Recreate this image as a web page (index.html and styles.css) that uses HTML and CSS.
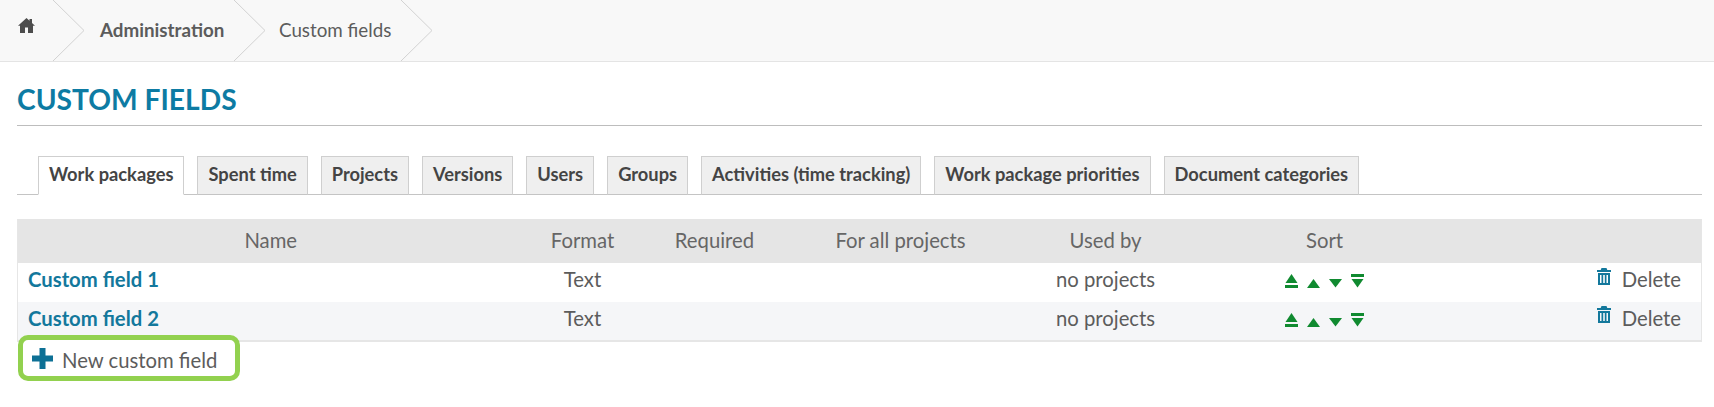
FILE: index.html
```html
<!doctype html>
<html>

<head>
    <title>Custom fields</title>
    <link rel="stylesheet" href="styles.css">
</head>

<body>

    <svg class="iconDefs" width="0" height="0">
        <symbol id="sortTop" viewBox="0 0 13 15">
            <path d="M6.500 0 12.500 9H.5z" />
            <rect x="0" y="11" width="13" height="3" />
        </symbol>
        <symbol id="sortUp" viewBox="0 0 13 15">
            <path d="M6.500 5 13 14H0z" />
        </symbol>
        <symbol id="sortDown" viewBox="0 0 13 15">
            <path d="M0 5H13L6.500 13.500z" />
        </symbol>
        <symbol id="sortBottom" viewBox="0 0 13 15">
            <rect x="0" y="0" width="13" height="3" />
            <path d="M.5 5H12.500L6.500 13.500z" />
        </symbol>
        <symbol id="trash" viewBox="0 0 14 17">
            <path d="M4.500 0H9.500L10.300 2H14V4H0V2H3.700z" />
            <path fill-rule="evenodd" d="M1 5H13V17H1zM3 7V15H4.500V7zM6.200 7V15H7.800V7zM9.500 7V15H11V7z" />
        </symbol>
    </svg>

    <nav class="breadcrumb">
        <a class="crumbHome" href="#">
            <svg width="17" height="15" viewBox="0 0 17 15">
                <path d="M8.500 0 11.500 2.700V1H14V5L17 7.800H15V15H10V9.500H7V15H2V7.800H0z" />
            </svg>
        </a>
        <svg class="chevron" width="33" height="61" viewBox="0 0 33 61">
            <path d="M0 0 31 30.500 0 61" />
        </svg>
        <a class="crumb crumbBold" href="#">Administration</a>
        <svg class="chevron" width="33" height="61" viewBox="0 0 33 61">
            <path d="M0 0 31 30.500 0 61" />
        </svg>
        <span class="crumb">Custom fields</span>
        <svg class="chevron" width="33" height="61" viewBox="0 0 33 61">
            <path d="M0 0 31 30.500 0 61" />
        </svg>
    </nav>

    <main class="content">

        <h2 class="pageTitle">Custom fields</h2>

        <ul class="tabs">
            <li class="tab tabActive">Work packages</li>
            <li class="tab">Spent time</li>
            <li class="tab">Projects</li>
            <li class="tab">Versions</li>
            <li class="tab">Users</li>
            <li class="tab">Groups</li>
            <li class="tab">Activities (time tracking)</li>
            <li class="tab">Work package priorities</li>
            <li class="tab">Document categories</li>
        </ul>

        <table class="fieldTable">
            <colgroup>
                <col class="colName">
                <col class="colFormat">
                <col class="colRequired">
                <col class="colAll">
                <col class="colUsed">
                <col class="colSort">
                <col>
            </colgroup>
            <thead>
                <tr>
                    <th>Name</th>
                    <th>Format</th>
                    <th>Required</th>
                    <th>For all projects</th>
                    <th>Used by</th>
                    <th>Sort</th>
                    <th></th>
                </tr>
            </thead>
            <tbody>
                <tr>
                    <td class="nameCell"><a href="#">Custom field 1</a></td>
                    <td>Text</td>
                    <td></td>
                    <td></td>
                    <td>no projects</td>
                    <td>
                        <span class="sortIcons">
                            <svg><use href="#sortTop" /></svg>
                            <svg><use href="#sortUp" /></svg>
                            <svg><use href="#sortDown" /></svg>
                            <svg><use href="#sortBottom" /></svg>
                        </span>
                    </td>
                    <td class="deleteCell">
                        <a class="deleteLink" href="#"><svg><use href="#trash" /></svg>Delete</a>
                    </td>
                </tr>
                <tr class="rowEven">
                    <td class="nameCell"><a href="#">Custom field 2</a></td>
                    <td>Text</td>
                    <td></td>
                    <td></td>
                    <td>no projects</td>
                    <td>
                        <span class="sortIcons">
                            <svg><use href="#sortTop" /></svg>
                            <svg><use href="#sortUp" /></svg>
                            <svg><use href="#sortDown" /></svg>
                            <svg><use href="#sortBottom" /></svg>
                        </span>
                    </td>
                    <td class="deleteCell">
                        <a class="deleteLink" href="#"><svg><use href="#trash" /></svg>Delete</a>
                    </td>
                </tr>
            </tbody>
        </table>

        <a class="newField" href="#">
            <svg width="21" height="21" viewBox="0 0 21 21">
                <path d="M7.500 0H13.500V7.500H21V13.500H13.500V21H7.500V13.500H0V7.500H7.500z" />
            </svg>
            New custom field
        </a>

    </main>

</body>

</html>
```

FILE: styles.css
```css
body {
    margin: 0;
    background-color: white;
    font-family: "Lato", "Liberation Sans", sans-serif;
    font-size: 20.3px;
    color: #5c5c5c;
}

a {
    color: inherit;
    text-decoration: none;
}

.iconDefs {
    display: block;
    height: 0;
}

/* breadcrumb bar */

.breadcrumb {
    display: flex;
    align-items: center;
    height: 61px;
    background-color: #f8f8f8;
    border-bottom: 1px solid #e4e4e4;
}

.crumbHome {
    display: flex;
    width: 53px;
    padding: 0 0 10px 18px;
    box-sizing: border-box;
}

.crumbHome svg {
    fill: #4d4d4d;
}

.chevron {
    flex-shrink: 0;
    fill: none;
    stroke: #d2d2d2;
    stroke-width: 1;
}

.crumb {
    width: 134px;
    padding: 0 0 2px 12px;
    box-sizing: border-box;
    font-size: 18.8px;
    line-height: 59px;
}

.crumbBold {
    width: 148px;
    padding-left: 14px;
    font-weight: 700;
}

/* page body */

.content {
    padding: 0 12px 0 17px;
}

.pageTitle {
    margin: 0;
    padding: 21px 0 9px;
    height: 33px;
    border-bottom: 1px solid #bdbdbd;
    font-size: 28.2px;
    line-height: 33px;
    font-weight: 700;
    text-transform: uppercase;
    color: #0d7ba3;
}

.tabs {
    display: flex;
    gap: 13px;
    margin: 30px 0 0;
    padding: 0 0 0 21px;
    list-style: none;
    border-bottom: 1px solid #c4c4c4;
}

.tab {
    margin-bottom: -1px;
    padding: 0 10px;
    height: 37px;
    line-height: 35px;
    background-color: #efefef;
    border: 1px solid #cfcfcf;
    border-bottom-color: #c4c4c4;
    font-size: 18.3px;
    font-weight: 700;
    color: #444;
}

.tabActive {
    background-color: white;
    border-bottom-color: white;
}

.fieldTable {
    width: 100%;
    margin-top: 24px;
    table-layout: fixed;
    border-collapse: collapse;
    border-right: 1px solid #e6e6e6;
    border-bottom: 2px solid #e6e6e6;
    border-left: 1px solid #e6e6e6;
}

.colName {
    width: 506px;
}

.colFormat {
    width: 118px;
}

.colRequired {
    width: 146px;
}

.colAll {
    width: 226px;
}

.colUsed {
    width: 184px;
}

.colSort {
    width: 254px;
}

.fieldTable th {
    height: 44px;
    padding: 0 0 2px;
    box-sizing: border-box;
    background-color: #e5e5e5;
    font-weight: 400;
    color: #666;
}

.fieldTable td {
    height: 39px;
    padding: 0 0 7px;
    box-sizing: border-box;
    text-align: center;
}

.rowEven td {
    background-color: #f5f6f8;
}

.fieldTable .nameCell {
    padding-left: 10px;
    text-align: left;
    font-weight: 700;
    color: #13789c;
}

.sortIcons {
    display: inline-flex;
    gap: 9px;
    vertical-align: middle;
}

.sortIcons svg {
    width: 13px;
    height: 15px;
    fill: #108a30;
}

.fieldTable .deleteCell {
    padding: 0 20px 9px 0;
    text-align: right;
}

.deleteLink {
    display: inline-flex;
    align-items: center;
    gap: 11px;
}

.deleteLink svg {
    width: 14px;
    height: 17px;
    margin-top: -6px;
    fill: #13789c;
}

.newField {
    display: flex;
    align-items: center;
    gap: 9px;
    width: 222px;
    height: 46px;
    margin: -7px 0 0 1px;
    padding: 4px 0 0 9px;
    box-sizing: border-box;
    position: relative;
    background-color: white;
    border: 5px solid #92d14f;
    border-radius: 10px;
}

.newField svg {
    flex-shrink: 0;
    margin-top: -4px;
    fill: #0d7095;
}
```
